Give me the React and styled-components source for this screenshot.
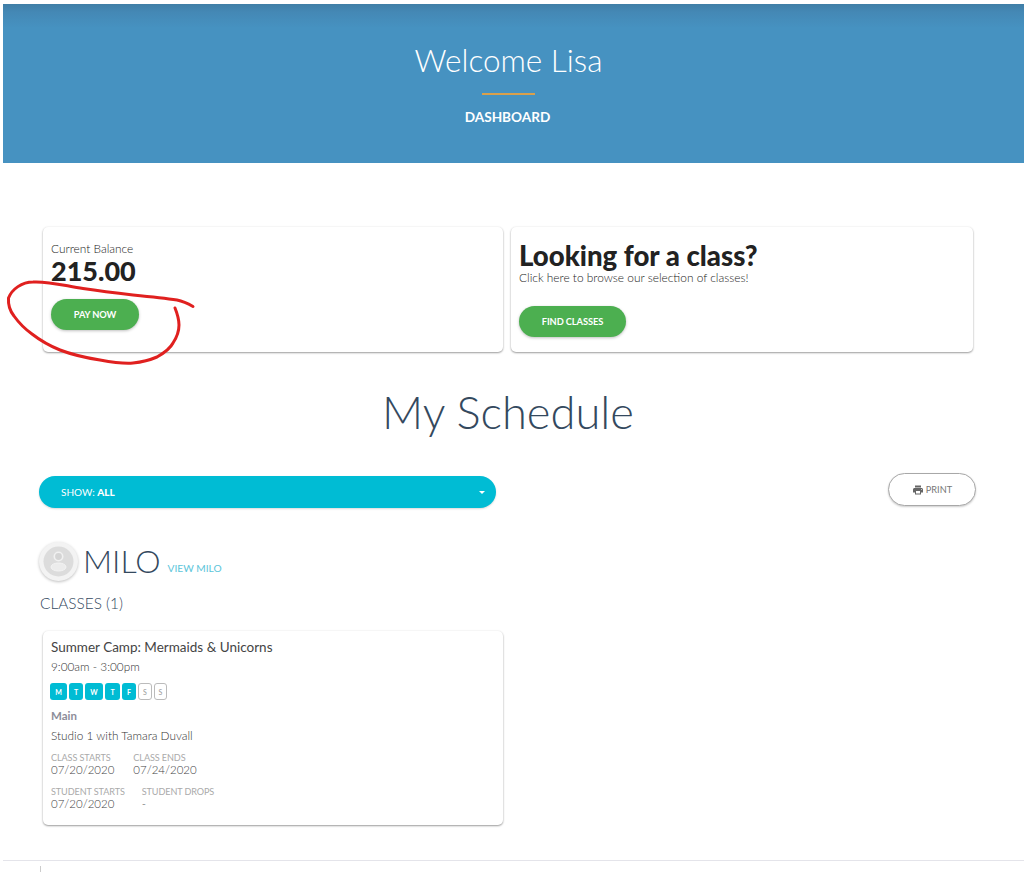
import React from 'react';
import styled, { createGlobalStyle } from 'styled-components';

const Global = createGlobalStyle`
  html, body { margin: 0; padding: 0; background: #fff; }
  body { font-family: Lato, "Open Sans", sans-serif; color: #2c3e50; }
`;
const Page = styled.div`
  position: relative; width: 1024px; height: 872px; overflow: hidden;
  padding: 4px 0 0 3px; box-sizing: border-box; background: #fff;
`;
const Hero = styled.header`
  height: 159px; box-sizing: border-box; padding: 38px 10px 0 0; margin-bottom: 64px;
  background: linear-gradient(#3f7ea6 0, #4488b5 8px, #4692c1 24px, #4692c1 100%);
  display: flex; flex-direction: column; align-items: center; color: #fff;
`;
const Welcome = styled.h1`
  margin: 0; font-weight: 300; font-size: 31.5px; line-height: 36px;
`;
const Rule = styled.div`width: 53px; height: 2px; background: #d9a04c; margin: 15px 0 13px;`;
const Crumb = styled.div`font-weight: 700; font-size: 13.6px; line-height: 18px; margin-left: -2px;`;
const TopCards = styled.div`display: flex; gap: 8px; padding-left: 40px;`;
const Card = styled.section`
  width: ${p => p.$w}px; height: ${p => p.$h}px; box-sizing: border-box;
  padding: ${p => p.$pad}; background: #fff; border-radius: 5px;
  box-shadow: 0 1px 2px rgba(0,0,0,.38), 0 0 3px rgba(0,0,0,.05);
`;
const Small = styled.div`font-weight: 300; font-size: 11.9px; line-height: 13px; color: #222;`;
const Amount = styled.div`font-weight: 900; font-size: 27px; line-height: 28px; color: #222; margin: 2px 0 14px;`;
const Headline = styled.div`font-weight: 900; font-size: 27.6px; line-height: 28px; color: #222;`;
const Tagline = styled(Small)`margin-top: 1px;`;
const GreenBtn = styled.button`
  display: block; width: ${p => p.$w}px; height: 31px; border: 0; border-radius: 16px; padding: 0;
  background: #4caf50; color: #fff; font: 700 9.3px Lato, sans-serif; letter-spacing: -.1px;
  box-shadow: 0 1px 3px rgba(0,0,0,.25); margin-top: ${p => p.$mt || 0}px;
`;
const Title = styled.h2`
  margin: 30px 0 34px; text-align: center; font-weight: 300; font-size: 45.3px; line-height: 60px;
  color: #34495e; width: 1010px;
`;
const Toolbar = styled.div`display: flex; align-items: flex-start; justify-content: space-between; padding: 0 48px 0 36px; margin-top: -3px;`;
const Select = styled.div`
  width: 457px; height: 32px; margin-top: 3px; border-radius: 16px; background: #00bcd4; color: #fff;
  display: flex; align-items: center; justify-content: space-between; box-sizing: border-box;
  padding: 0 11px 0 22px; font-size: 10px; box-shadow: 0 1px 2px rgba(0,0,0,.15);
  b { font-weight: 900; }
`;
const Caret = styled.span`width: 0; height: 0; border: 3px solid transparent; border-top: 3.5px solid #fff; border-bottom: 0;`;
const Print = styled.button`
  width: 88px; height: 33px; border: 1px solid #a8a8a8; border-radius: 17px; background: #fff;
  display: flex; align-items: center; justify-content: center; gap: 2px; padding: 0;
  color: #777; font: 400 9.2px Lato, sans-serif; box-shadow: 0 1px 2px rgba(0,0,0,.2);
`;
const Student = styled.div`display: flex; align-items: center; padding-left: 36px; margin-top: 33px; height: 40px;`;
const Avatar = styled.div`
  width: 39px; height: 39px; border-radius: 50%; background: #f3f3f3; box-sizing: border-box;
  box-shadow: 0 1px 3px rgba(0,0,0,.25); display: flex; align-items: center; justify-content: center; margin-right: 5px;
`;
const Name = styled.div`font-weight: 300; font-size: 32px; line-height: 40px; color: #34495e;`;
const ViewLink = styled.a`font-weight: 400; font-size: 10.2px; color: #5cc5da; margin: 14px 0 0 7px;`;
const Classes = styled.div`font-weight: 300; font-size: 15.4px; line-height: 18px; color: #34495e; margin: 13px 0 19px 37px;`;
const ClassWrap = styled.div`padding-left: 40px;`;
const ClassName = styled.div`font-weight: 400; font-size: 13.5px; line-height: 16px; color: #444; margin-top: -1px;`;
const Time = styled.div`font-weight: 300; font-size: 11.8px; line-height: 14px; color: #333; margin-top: 5px;`;
const Days = styled.div`display: flex; gap: 2px; margin: 9px 0 0 -1px; height: 17px;`;
const Day = styled.span`
  height: 17px; width: ${p => p.$w}px; box-sizing: border-box; border-radius: 3px;
  display: flex; align-items: center; justify-content: center; font-size: 7px; font-weight: 700;
  ${p => p.$on ? 'background:#00bcd4;color:#fff;' : 'background:#fff;color:#999;border:1px solid #bbb;font-weight:400;'}
`;
const Location = styled.div`font-weight: 700; font-size: 11.5px; line-height: 14px; color: #8d8d99; margin-top: 9px;`;
const Studio = styled.div`font-weight: 300; font-size: 11.8px; line-height: 14px; color: #333; margin-top: 6px;`;
const Dates = styled.div`display: flex; gap: ${p => p.$gap}px; margin-top: ${p => p.$mt}px;`;
const Label = styled.div`font-weight: 400; font-size: 9.1px; line-height: 10px; color: #aaa; letter-spacing: -.1px;`;
const Value = styled.div`font-weight: 300; font-size: 11.5px; line-height: 13px; color: #444;`;
const Footer = styled.div`position: absolute; left: 3px; right: 0; top: 860px; border-top: 1px solid #e4e4ea;`;
const Tick = styled.div`position: absolute; left: 40px; top: 866px; width: 1px; height: 6px; background: #ccc;`;
const Scribble = styled.svg`position: absolute; left: 0; top: 270px; pointer-events: none;`;

const DateCell = ({ label, value }) => (
  <div><Label>{label}</Label><Value>{value}</Value></div>
);

export default function App() {
  return (
    <Page>
      <Global />
      <Hero>
        <Welcome>Welcome Lisa</Welcome>
        <Rule />
        <Crumb>DASHBOARD</Crumb>
      </Hero>
      <TopCards>
        <Card $w={460} $h={125} $pad="15px 8px">
          <Small>Current Balance</Small>
          <Amount>215.00</Amount>
          <GreenBtn $w={88}>PAY NOW</GreenBtn>
        </Card>
        <Card $w={462} $h={125} $pad="15px 8px">
          <Headline>Looking for a class?</Headline>
          <Tagline>Click here to browse our selection of classes!</Tagline>
          <GreenBtn $w={107} $mt={22}>FIND CLASSES</GreenBtn>
        </Card>
      </TopCards>
      <Title>My Schedule</Title>
      <Toolbar>
        <Select><span>SHOW: <b>ALL</b></span><Caret /></Select>
        <Print>
          <svg width="12" height="12" viewBox="0 0 24 24" fill="#666"><path d="M19 8H5c-1.66 0-3 1.34-3 3v6h4v4h12v-4h4v-6c0-1.66-1.34-3-3-3zm-3 11H8v-5h8v5zm3-7c-.55 0-1-.45-1-1s.45-1 1-1 1 .45 1 1-.45 1-1 1zm-1-9H6v4h12V3z" /></svg>
          PRINT
        </Print>
      </Toolbar>
      <Student>
        <Avatar>
          <svg width="31" height="31" viewBox="0 0 31 31" fill="none">
            <circle cx="15.5" cy="15.5" r="15" fill="#dcdcdc" />
            <circle cx="15.5" cy="10.5" r="4.2" fill="#d4d4d4" stroke="#f1f1f1" strokeWidth="1.6" />
            <ellipse cx="15.5" cy="21" rx="7.5" ry="4" fill="#ececec" stroke="#f4f4f4" strokeWidth="1" />
          </svg>
        </Avatar>
        <Name>MILO</Name>
        <ViewLink>VIEW MILO</ViewLink>
      </Student>
      <Classes>CLASSES (1)</Classes>
      <ClassWrap>
        <Card $w={460} $h={194} $pad="9px 8px">
          <ClassName>Summer Camp: Mermaids &amp; Unicorns</ClassName>
          <Time>9:00am - 3:00pm</Time>
          <Days>
            <Day $on $w={17}>M</Day>
            <Day $on $w={14}>T</Day>
            <Day $on $w={18}>W</Day>
            <Day $on $w={15}>T</Day>
            <Day $on $w={14}>F</Day>
            <Day $w={14}>S</Day>
            <Day $w={13}>S</Day>
          </Days>
          <Location>Main</Location>
          <Studio>Studio 1 with Tamara Duvall</Studio>
          <Dates $gap={19} $mt={10}>
            <DateCell label="CLASS STARTS" value="07/20/2020" />
            <DateCell label="CLASS ENDS" value="07/24/2020" />
          </Dates>
          <Dates $gap={17} $mt={11}>
            <DateCell label="STUDENT STARTS" value="07/20/2020" />
            <DateCell label="STUDENT DROPS" value="-" />
          </Dates>
        </Card>
      </ClassWrap>
      <Footer />
      <Tick />
      <Scribble width="200" height="100" viewBox="0 270 200 100" fill="none">
        <path d="M193 306.5 C187 303 182 301 177 300 C163 298 148 296.5 133 295 C116 293 100 291 83 288.5 C66 286 48 281 33 282 C22 282 12 289 8.5 298 C8 305 10 311 14 316 C19 323 25 329 32 334 C41 341 50 346 60 350 C73 355 87 358 100 360 C111 362 122 364 133 363 C142 362 150 360 157 357 C164 353 170 349 173 343 C177 337 179 331 179 325 C179 319 177 313 175 308" stroke="#e0201f" strokeWidth="3" strokeLinecap="round" />
      </Scribble>
    </Page>
  );
}
